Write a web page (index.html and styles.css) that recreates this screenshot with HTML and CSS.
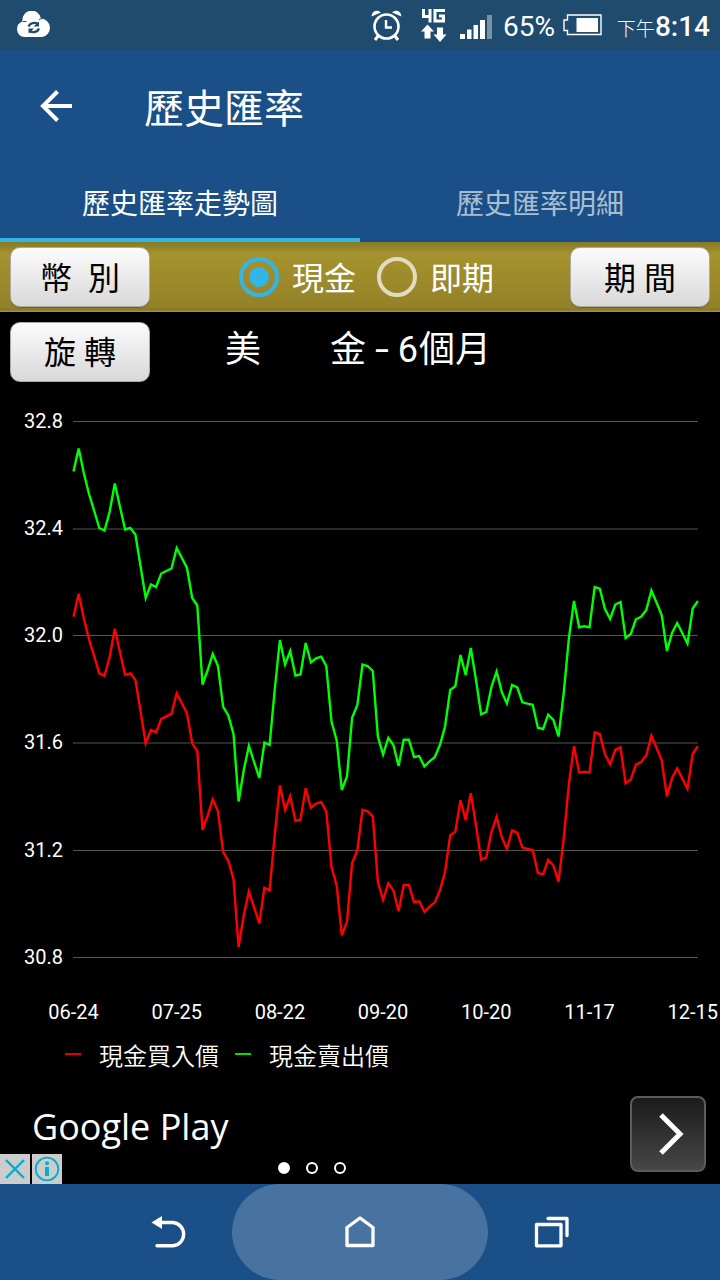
FILE: index.html
```html
<!DOCTYPE html>
<html lang="zh-Hant">
<head>
<meta charset="UTF-8">
<meta name="viewport" content="width=device-width, initial-scale=1.0">
<title>歷史匯率</title>
<link rel="stylesheet" href="styles.css">
</head>

<body>

<!-- STATUS BAR -->
<div class="status-bar">
    <svg class="cloud" width="36" height="28" viewBox="0 0 36 28">
        <path fill="#fff" d="M8 26a8 8 0 0 1-1.500-15.500A9 9 0 0 1 25 7.500A9.300 9.300 0 0 1 26 26z"/>
        <path d="M7 10.500h3.500M23 8.500l3-1" stroke="#1f4b6e" stroke-width="1"/>
        <path d="M12.500 15.500a6 5 0 0 1 9.500-2.500M23 17.500a6 5 0 0 1-9.500 2.500" fill="none" stroke="#1f4b6e" stroke-width="2.400"/>
        <path d="M17.500 15.500h5.500v-5zM18 17.500h-5.500v5z" fill="#1f4b6e"/>
    </svg>
    <svg class="alarm" width="32" height="32" viewBox="0 0 32 32" fill="none" stroke="#fff">
        <circle cx="15.500" cy="17.500" r="12" stroke-width="2.600"/>
        <path d="M15 11v7.500h6" stroke-width="2.400"/>
        <path d="M7 27l-3 4M24 27l3 4" stroke-width="3"/>
        <path d="M.5 7.500C1 2 6 0 10 3.500zM30.500 7.500C30 2 25 0 21 3.500z" fill="#fff" stroke="none"/>
    </svg>
    <svg class="network" width="26" height="34" viewBox="0 0 26 34">
        <path d="M2.500 1v7.500h8M9 1v13.500M24 2.500H14v10.500h8.500V8H18" fill="none" stroke="#fff" stroke-width="3"/>
        <path fill="#fff" d="M6.500 16.500l6.500 7h-3.500v7h-6v-7H0zM19 34l-6.500-7.500H16v-7h6v7h3.500z"/>
    </svg>
    <svg class="signal" width="32" height="24" viewBox="0 0 32 24" fill="#fff">
        <path d="M0 19h5v5H0zM7 14.500h4.500V24H7zM13.500 10H18v14h-4.500zM20 5h5v19h-5z"/>
        <path d="M27 0h5v24h-5z" opacity=".4"/>
    </svg>
    <span class="percent">65%</span>
    <svg class="battery" width="39" height="22" viewBox="0 0 39 22">
        <path d="M4.500 1h33.500v19.500H4.500V16.500H1V6h3.500z" fill="none" stroke="#fff" stroke-width="1.400"/>
        <path d="M13.500 4H35v14H13.500z" fill="#fff"/>
    </svg>
    <span class="clock"><small>下午</small>8:14</span>
</div>

<!-- HEADER -->
<header>
    <div class="title-bar">
        <svg width="34" height="34" viewBox="0 0 34 34" fill="none" stroke="#fff" stroke-width="4">
            <path d="M33 17H4M18.500 2.500L4 17l14.500 14.500"/>
        </svg>
        <h1>歷史匯率</h1>
    </div>
    <nav class="tabs">
        <div class="tab active">歷史匯率走勢圖</div>
        <div class="tab">歷史匯率明細</div>
    </nav>
</header>

<!-- FILTERS -->
<div class="filters">
    <button class="btn">幣&nbsp; 別</button>
    <div class="radios">
        <span class="radio checked"></span><label>現金</label>
        <span class="radio"></span><label>即期</label>
    </div>
    <button class="btn">期 間</button>
</div>

<main>
    <div class="chart-head">
        <button class="btn rotate">旋 轉</button>
        <h2><span>美</span><span>金 <b>-</b> <em>6</em>個月</span></h2>
    </div>
    <svg id="chart" width="720" height="640" viewBox="0 392 720 640"></svg>
    <div class="legend">
        <i class="buy"></i><span>現金買入價</span>
        <i class="sell"></i><span>現金賣出價</span>
    </div>
</main>

<!-- AD -->
<div class="ad">
    <span class="ad-text">Google Play</span>
    <div class="ad-next">
        <svg width="26" height="42" viewBox="0 0 26 42"><path d="M2 2l19 19L2 40" fill="none" stroke="#fff" stroke-width="5"/></svg>
    </div>
    <div class="dots"><i class="on"></i><i></i><i></i></div>
    <div class="ad-badges">
        <svg width="30" height="30" viewBox="0 0 30 30"><path d="M6 6l18 18M24 6L6 24" stroke="#00aecd" stroke-width="2.400"/></svg>
        <svg width="30" height="30" viewBox="0 0 30 30">
            <circle cx="15" cy="15" r="11.300" fill="none" stroke="#00aecd" stroke-width="1.800"/>
            <circle cx="15" cy="9.200" r="2" fill="#00aecd"/>
            <path d="M13 13h4v9h-4z" fill="#00aecd"/>
        </svg>
    </div>
</div>

<!-- NAVIGATION -->
<footer>
    <svg class="nav-back" width="36" height="34" viewBox="0 0 36 34">
        <path d="M9 7.500h13a11.700 11.700 0 0 1 0 23.300H6" fill="none" stroke="#fff" stroke-width="3.400" stroke-linecap="round"/>
        <path d="M.5 7.500L11 1v13z" fill="#fff"/>
    </svg>
    <div class="nav-home">
        <svg width="30" height="34" viewBox="0 0 30 34">
            <path d="M2 12.500L15 3l13 9.500v18H2z" fill="none" stroke="#fff" stroke-width="3.300" stroke-linejoin="round"/>
        </svg>
    </div>
    <svg class="nav-recent" width="36" height="34" viewBox="0 0 36 34" fill="none" stroke="#fff" stroke-width="3.300" stroke-linejoin="round" stroke-linecap="round">
        <path d="M2.500 9.500h24.500v21.300H2.500zM14 3.500h19v17"/>
    </svg>
</footer>

<script>
/* RATES: plotted height of the sell line, one value per business day */
const sell = [
    471.5, 448.5, 473, 494, 510.5, 528, 530.5, 512, 483.5, 506.5,
    529.5, 528, 534.5, 566.5, 598, 584.5, 587, 573.5, 571, 568.5,
    548, 558, 568, 598, 605.5, 684.5, 670, 654, 666, 706.5,
    715.5, 734, 801.5, 770, 746, 762, 778, 742.5, 745, 690,
    640, 664.5, 651, 675.5, 674.5, 643, 662.5, 658.3, 656.7, 666,
    721.5, 740.5, 790, 776.5, 717.7, 705.3, 664.5, 666, 671, 736.7,
    754.5, 738, 745, 766, 739.7, 739.7, 757, 756, 766.5, 761.3,
    757.3, 745, 726.7, 690, 686.3, 655, 675, 648, 680, 714.3,
    712, 686.7, 671.5, 692, 703.5, 685, 687.3, 702.3, 703.7, 704.7,
    727.7, 729, 714.7, 720, 736.5, 693.3, 638.5, 601, 627.3, 626.3,
    627.3, 587, 588.7, 609, 619, 604.5, 602, 638, 634, 619.3,
    616.7, 610, 590.5, 602.7, 615, 651, 632.7, 623, 633.3, 643.5,
    608.5, 601
];
const spread = 145.3;
const left = 73.5;
const step = 5.16;

/* AXES */
const rows = { '32.8': 421.5, '32.4': 529, '32.0': 635.5, '31.6': 743, '31.2': 850.5, '30.8': 957.5 };
const dates = ['06-24', '07-25', '08-22', '09-20', '10-20', '11-17', '12-15'];
let out = '';

for (const rate in rows) {
    out += `<path class="grid" d="M73 ${rows[rate]}H698"/>`;
    out += `<text x="63" y="${Math.round(rows[rate] + 6)}" text-anchor="end">${rate}</text>`;
}
dates.forEach((date, i) => {
    out += `<text x="${left + i * step * 20}" y="1019" text-anchor="middle">${date}</text>`;
});

/* LINES */
function line(name, offset) {
    const points = sell.map((y, i) => (left + i * step).toFixed(1) + ',' + (y + offset).toFixed(1));
    return `<polyline class="${name}" points="${points.join(' ')}"/>`;
}

document.getElementById('chart').innerHTML = out + line('buy', spread) + line('sell', 0);
</script>

</body>
</html>
```
FILE: styles.css
```css
* {
    margin: 0;
    padding: 0;
    box-sizing: border-box;
}

body {
    width: 720px;
    height: 1280px;
    display: flex;
    flex-direction: column;
    background: #000;
    color: #fff;
    font-family: Roboto, 'Noto Sans CJK TC', sans-serif;
    overflow: hidden;
}

svg {
    display: block;
    flex-shrink: 0;
}

/* STATUS BAR */
.status-bar {
    height: 50px;
    display: flex;
    align-items: center;
    background: #1f4b6e;
    padding: 0 10px 0 16px;
}

.alarm {
    margin-left: 319px;
}

.network {
    margin-left: 18px;
}

.signal {
    margin: 3px 0 0 13px;
}

.percent {
    width: 60px;
    margin: 3px 0 0 11px;
    font-size: 28px;
}

.battery {
    flex-shrink: 0;
}

.clock {
    margin: 3px 0 0 auto;
    font-size: 28px;
    font-weight: 500;
    white-space: nowrap;
}

.clock small {
    font-size: 19px;
    font-weight: 300;
}

/* HEADER */
header {
    height: 192px;
    background: #1a4f87;
}

.title-bar {
    height: 112px;
    display: flex;
    align-items: center;
    padding-left: 39px;
}

.title-bar h1 {
    margin-left: 71px;
    font-size: 40px;
    font-weight: 400;
}

.tabs {
    height: 80px;
    display: flex;
}

.tab {
    flex: 1;
    padding-top: 22px;
    text-align: center;
    font-size: 28px;
    line-height: 42px;
    font-weight: 400;
    color: rgba(255,255,255,0.65);
}

.tab.active {
    color: #fff;
    border-bottom: 4px solid #33b5e5;
}

/* FILTERS */
.filters {
    height: 70px;
    display: flex;
    justify-content: space-between;
    padding: 5px 10px;
    background: linear-gradient(#857927, #a5932e 12px, #938128 66px, #85752a 68px, #a5932e 69px);
}

.btn {
    width: 140px;
    height: 60px;
    padding-bottom: 3px;
    border: 1px solid #aaa;
    border-radius: 10px;
    background: linear-gradient(#fcfcfc, #d8d8d8);
    color: #000;
    font-family: inherit;
    font-size: 32px;
    font-weight: 400;
    box-shadow: 0 1px 1px rgba(0,0,0,0.25);
}

.btn.rotate {
    padding-bottom: 4px;
}

.radios {
    display: flex;
    align-items: center;
    margin-left: 34px;
    font-size: 32px;
}

.radios label {
    margin: -2px 21px 0 13px;
}

.radio {
    width: 40px;
    height: 40px;
    border: 4px solid #e2dbbd;
    border-radius: 50%;
    padding: 6px;
}

.radio.checked {
    border-color: #33b5e5;
    background: #33b5e5 content-box;
}

/* CHART */
.chart-head {
    height: 80px;
    display: flex;
    padding: 10px;
}

.chart-head h2 {
    display: flex;
    gap: 69px;
    margin-left: 75px;
    padding-top: 1px;
    font-size: 36px;
    line-height: 54px;
    font-weight: 400;
}

.chart-head b {
    display: inline-block;
    margin: 0 2px;
    transform: scaleX(1.4);
    font-weight: 400;
}

.chart-head em {
    margin-right: 1px;
    font-style: normal;
}

#chart {
    font-size: 20px;
    fill: #fff;
}

#chart .grid {
    stroke: #555;
}

#chart polyline {
    fill: none;
    stroke-width: 2.4;
}

#chart .buy {
    stroke: #f00;
}

#chart .sell {
    stroke: #0f0;
}

.legend {
    height: 48px;
    display: flex;
    align-items: center;
    padding-left: 65px;
    font-size: 24px;
    font-weight: 350;
}

.legend i {
    width: 16px;
    height: 2px;
    margin-top: -5px;
}

.legend span {
    margin: -4px 16px 0 18px;
}

.legend .buy {
    background: #e00000;
}

.legend .sell {
    background: #00e000;
}

/* AD */
.ad {
    height: 104px;
    position: relative;
    display: flex;
    justify-content: space-between;
    padding: 16px 14px 0 32px;
}

.ad-text {
    font-family: 'Open Sans', sans-serif;
    font-size: 36px;
    line-height: 62px;
}

.ad-next {
    width: 76px;
    height: 76px;
    display: flex;
    align-items: center;
    justify-content: center;
    padding-left: 7px;
    border: 2px solid #5c5c5c;
    border-radius: 8px;
    background: linear-gradient(#1b1b1b, #474747);
}

.dots {
    position: absolute;
    left: 278px;
    bottom: 10px;
    display: flex;
    gap: 16px;
}

.dots i {
    width: 12px;
    height: 12px;
    border: 2px solid #fff;
    border-radius: 50%;
}

.dots .on {
    background: #fff;
}

.ad-badges {
    position: absolute;
    left: 0;
    bottom: 0;
    display: flex;
    gap: 2px;
}

.ad-badges svg {
    background: #ccc;
}

/* NAVIGATION */
footer {
    height: 96px;
    display: flex;
    align-items: center;
    background: #1a4f87;
}

.nav-back {
    margin-left: 151px;
}

.nav-home {
    width: 256px;
    height: 96px;
    margin: 0 46px 0 45px;
    display: flex;
    align-items: center;
    justify-content: center;
    border-radius: 48px;
    background: #4872a0;
}
```
